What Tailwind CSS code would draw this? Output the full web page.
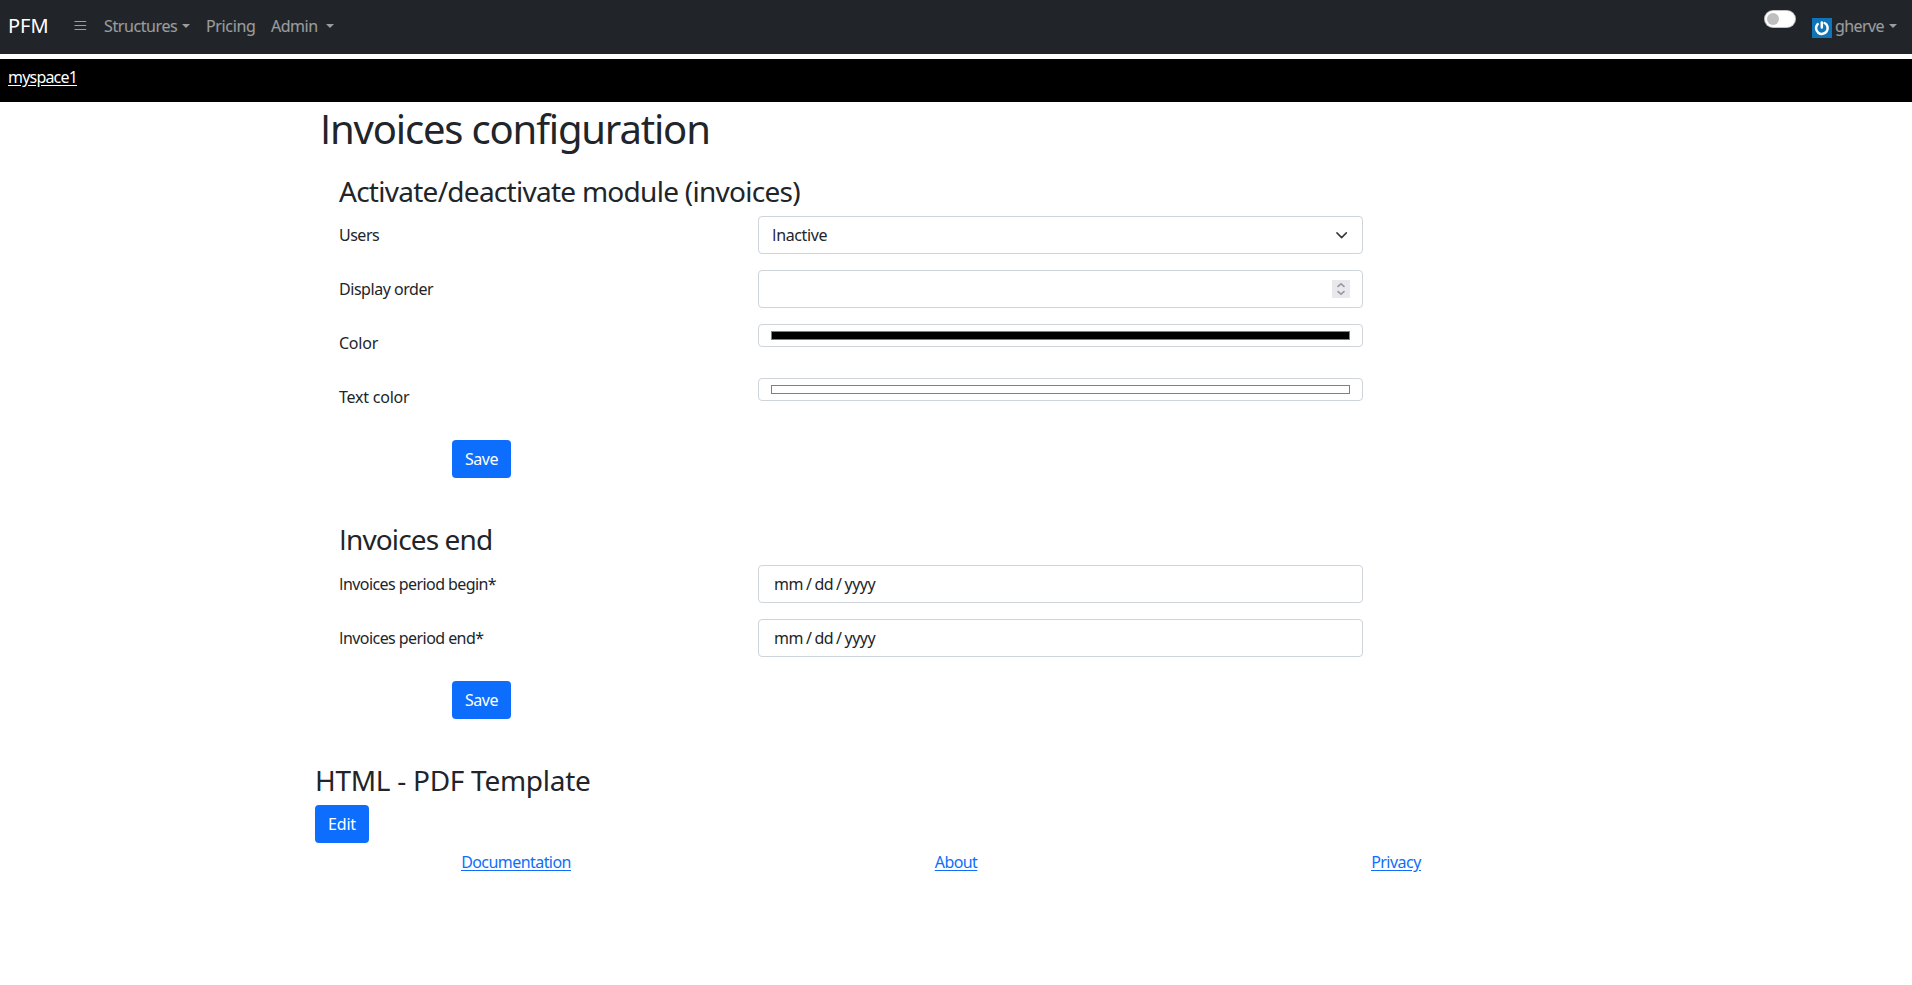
<!DOCTYPE html>
<html lang="en">
<head>
<meta charset="utf-8">
<title>PFM - Invoices configuration</title>
<script src="https://cdn.jsdelivr.net/npm/@tailwindcss/browser@4"></script>
</head>
<body class="bg-white text-[#212529] text-base leading-6 font-['Noto_Sans',sans-serif]">
<nav class="flex h-[54px] items-start justify-between bg-[#212529] pl-2 text-white/55">
  <div class="flex h-[30px] mt-[11px] items-center">
    <a class="w-[66px] text-xl leading-[30px] text-white">PFM</a>
    <svg class="mr-[17px] h-[13px] w-[13px] -mt-px" viewBox="0 0 13 13" stroke="currentColor" stroke-width="1"><path d="M.5 2.5h11.7M.5 6.5h11.7M.5 10.5h11.7"/></svg>
    <a class="flex w-[102px] items-center"><span class="tracking-[-0.4px]">Structures</span><i class="ml-[5px] border-x-4 border-t-4 border-x-transparent border-t-current"></i></a>
    <a class="w-[65px] tracking-[-0.36px]">Pricing</a>
    <a class="flex items-center"><span class="tracking-[-0.5px]">Admin</span><i class="ml-[8px] border-x-4 border-t-4 border-x-transparent border-t-current"></i></a>
  </div>
  <div class="flex items-start">
    <div class="mt-[10px] mr-4 h-[18px] w-8 rounded-full border border-black/25 bg-white p-0.5"><div class="size-3 rounded-full bg-[#bfbfbf]"></div></div>
    <a class="mt-[14px] mr-[15px] flex items-center">
      <svg class="mt-[4px] mr-[3px] h-5 w-5" viewBox="0 0 20 20" fill="none" stroke="#fff" stroke-width="2.5" stroke-linecap="round"><path d="M0 0h20v20H0z" fill="#1074b9" stroke="none"/><path d="M9.8 4.4v5.2M12.6 5A5.8 5.8 0 1 1 5.7 6.1"/></svg>
      <span class="tracking-[-0.58px]">gherve</span><i class="ml-[5px] -mt-px border-x-4 border-t-4 border-x-transparent border-t-current"></i>
    </a>
  </div>
</nav>
<div class="mt-[5px] h-[43px] bg-black px-2 pt-[6px] text-white"><a class="tracking-[-0.8px] underline underline-offset-2">myspace1</a></div>
<main class="ml-[315px] w-[1282px] pt-[3px]">
  <h1 class="pl-[5px] text-[40px] leading-[48px] tracking-[-1.17px]"><span class="font-['Open_Sans']">I</span>nvoices configuration</h1>
  <form class="mt-[21px] pl-6">
    <h3 class="mb-2 h-[34px] text-[28px] leading-[34px] tracking-[-0.73px]">Activate/deactivate module (invoices)</h3>
    <div class="grid grid-cols-[419px_605px] auto-rows-[38px] gap-y-4">
      <label class="pt-[7px] tracking-[-0.5px]">Users</label>
      <div class="flex items-center justify-between rounded-[4px] border border-[#ced4da] pl-[13px] pr-[13px] tracking-[-0.35px]"><span><span class="font-['Open_Sans']">I</span>nactive</span>
        <svg class="h-4 w-4" viewBox="0 0 16 16" fill="none" stroke="#343a40" stroke-width="2" stroke-linecap="round" stroke-linejoin="round"><path d="m2 5 6 6 6-6" transform="translate(2.4 2) scale(.78)"/></svg></div>
      <label class="pt-[7px] tracking-[-0.46px]">Display order</label>
      <div class="flex items-center justify-end rounded-[4px] border border-[#ced4da] pr-3">
        <svg class="h-[18px] w-[18px]" viewBox="0 0 18 18" fill="none" stroke="#9a99a3" stroke-width="1.6"><path d="M0 0h18v18H0z" fill="#e9e9ed" stroke="none"/><path d="m5.5 6.8 3.5-3 3.5 3M5.5 11.2l3.5 3 3.5-3"/></svg></div>
      <label class="pt-[7px] tracking-[-0.24px]">Color</label>
      <div class="h-[23px] rounded-[4px] border border-[#ced4da] px-3 py-[6px]"><div class="h-[9px] border border-[#808080] bg-black"></div></div>
      <label class="pt-[7px] tracking-[-0.22px]">Text color</label>
      <div class="h-[23px] rounded-[4px] border border-[#ced4da] px-3 py-[6px]"><div class="h-[9px] border border-[#808080] bg-white"></div></div>
    </div>
    <button class="mt-6 ml-[113px] block h-[38px] w-[59px] rounded-[4px] bg-[#0d6efd] text-white tracking-[-0.48px]">Save</button>
  </form>
  <form class="mt-[44px] pl-6">
    <h3 class="mb-[9px] h-[34px] text-[28px] leading-[34px] tracking-[-0.87px]"><span class="font-['Open_Sans']">I</span>nvoices end</h3>
    <div class="grid grid-cols-[419px_605px] auto-rows-[38px] gap-y-4">
      <label class="pt-[7px] tracking-[-0.57px]"><span class="font-['Open_Sans']">I</span>nvoices period begin*</label>
      <div class="flex items-center gap-[3px] rounded-[4px] border border-[#ced4da] pl-[15px] tracking-[-0.5px]"><span>mm</span><span>/</span><span>dd</span><span>/</span><span>yyyy</span></div>
      <label class="pt-[7px] tracking-[-0.56px]"><span class="font-['Open_Sans']">I</span>nvoices period end*</label>
      <div class="flex items-center gap-[3px] rounded-[4px] border border-[#ced4da] pl-[15px] tracking-[-0.5px]"><span>mm</span><span>/</span><span>dd</span><span>/</span><span>yyyy</span></div>
    </div>
    <button class="mt-6 ml-[113px] block h-[38px] w-[59px] rounded-[4px] bg-[#0d6efd] text-white tracking-[-0.48px]">Save</button>
  </form>
  <h3 class="mt-[44px] mb-2 h-[34px] text-[28px] leading-[34px] tracking-[-0.28px]">HTML - PDF Template</h3>
  <button class="block h-[38px] w-[54px] rounded-[4px] bg-[#0d6efd] text-white tracking-[-0.16px]">Edit</button>
</main>
<footer class="mx-auto mt-[7px] grid w-[1320px] grid-cols-3 text-center text-[#0d6efd] underline underline-offset-2">
  <a class="tracking-[-0.56px]">Documentation</a><a class="tracking-[-0.62px]">About</a><a class="tracking-[-0.52px]">Privacy</a>
</footer>
</body>
</html>
